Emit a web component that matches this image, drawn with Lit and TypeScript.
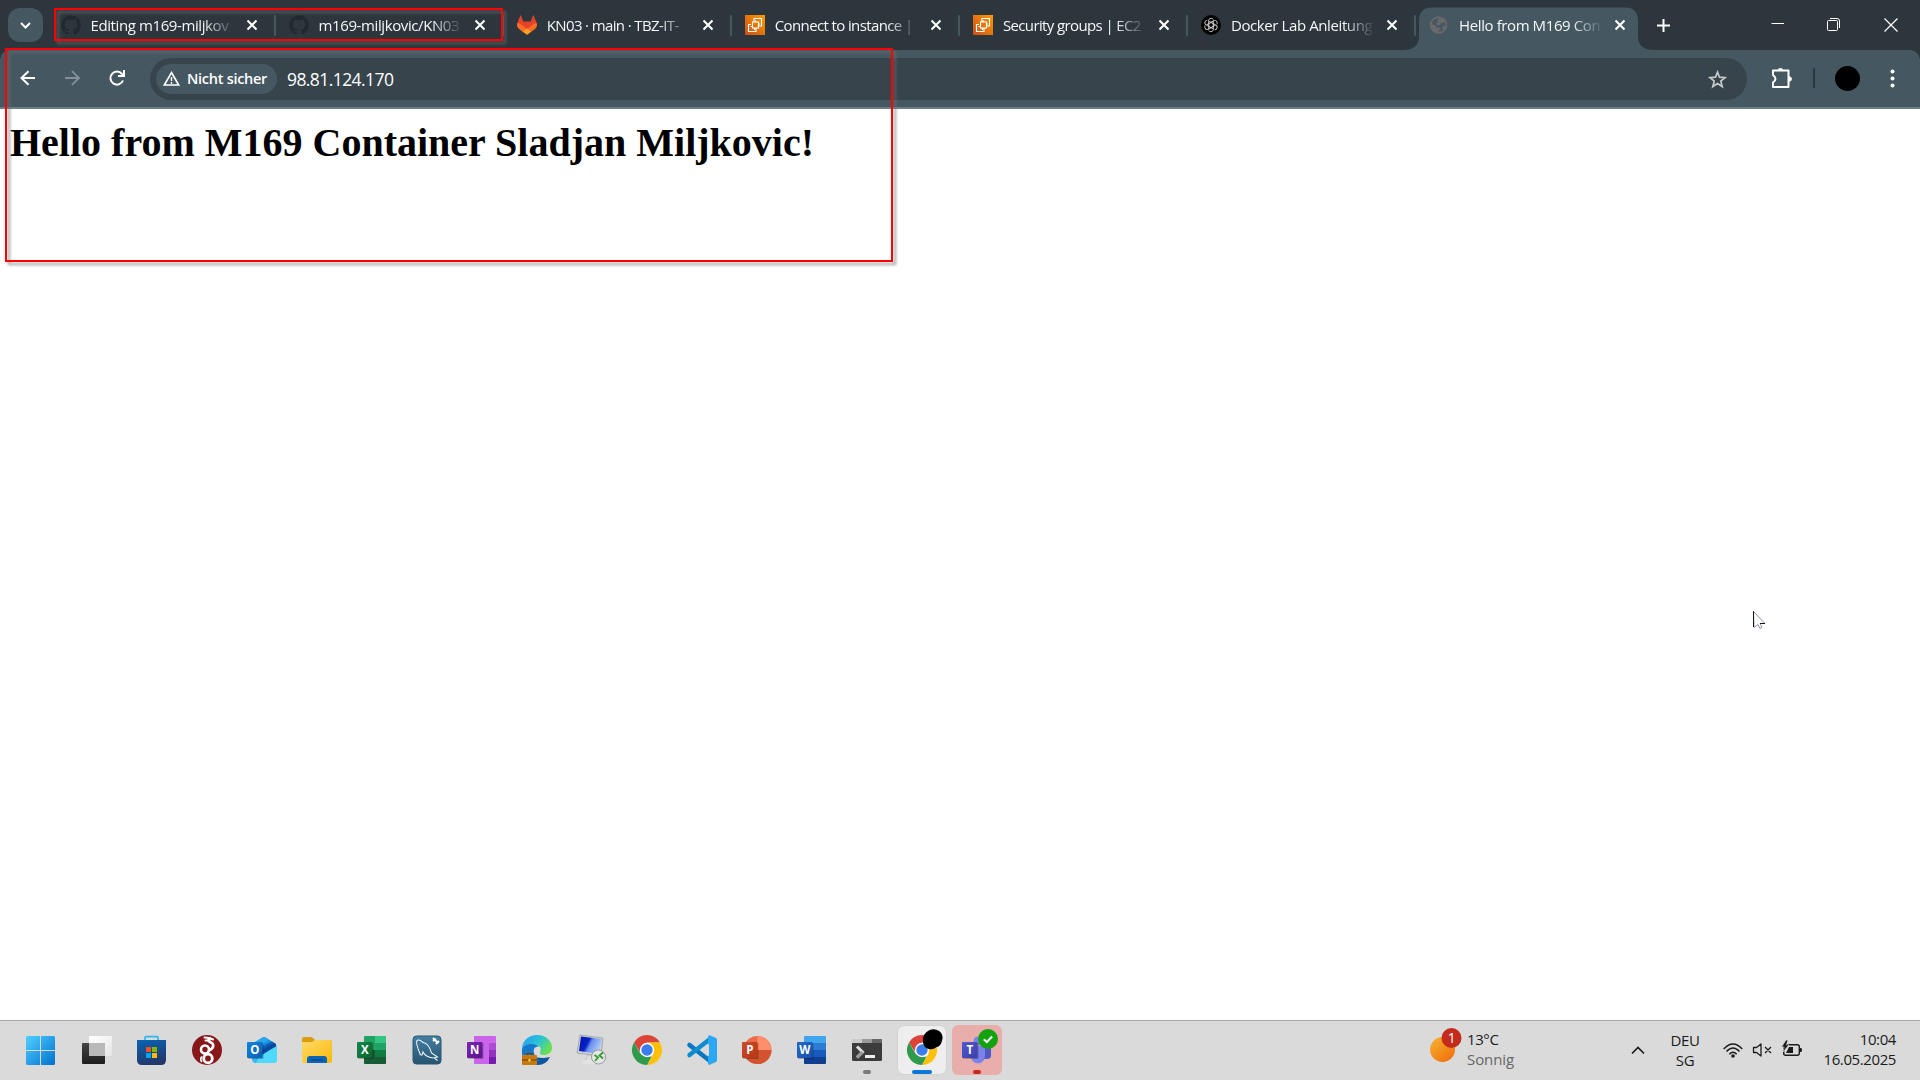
import { LitElement, html, css, svg, TemplateResult, SVGTemplateResult } from "lit";
import { customElement } from "lit/decorators.js";
import { classMap } from "lit/directives/class-map.js";

const github = svg`<path fill="#20292e" d="M10 .4a9.8 9.8 0 0 0-3.100 19.100c.5.1.7-.2.7-.5v-1.800c-2.700.6-3.300-1.200-3.300-1.200-.5-1.100-1.100-1.400-1.100-1.400-.9-.6.1-.6.1-.6 1 .1 1.500 1 1.500 1 .9 1.500 2.300 1.100 2.900.8.1-.6.3-1.100.6-1.300-2.200-.3-4.500-1.100-4.500-4.900 0-1.100.4-2 1-2.700-.1-.2-.4-1.200.1-2.600 0 0 .8-.3 2.700 1a9.300 9.300 0 0 1 4.900 0c1.900-1.300 2.700-1 2.700-1 .5 1.400.2 2.400.1 2.600.6.7 1 1.600 1 2.700 0 3.800-2.300 4.600-4.500 4.900.4.300.7.9.7 1.800V19c0 .3.2.6.7.5A9.800 9.800 0 0 0 10 .4z"/>`;
const gitlab = svg`<path fill="#e24329" d="M19.700 8 16.700.6q-.4-.7-.8.1L13.700 6.500H6.300L4.100.7q-.4-.8-.8-.1L.4 8q-1 3.600 1.800 6L10 19.600 17.800 14q2.900-2.300 1.900-6z"/><path fill="#fc6d26" d="M19.700 8q-2 .4-3.800 1.500L10 14l4.300 2.700 3.500-2.700q2.900-2.300 1.900-6zM.3 8q2 .4 3.800 1.500L10 14l-4.300 2.700L2.200 14Q-.7 11.700.3 8z"/><path fill="#fca326" d="m5.700 16.700 4.300-3.300 4.300 3.300-4.300 3z"/>`;
const aws = svg`<defs><linearGradient id="aw" x1="0" y1="1" x2="1" y2="0"><stop stop-color="#c8511b"/><stop offset="1" stop-color="#f90"/></linearGradient></defs><path fill="url(#aw)" d="M0 0h20v20H0z"/><g fill="none" stroke="#fff" stroke-width="1.100"><rect x="7.500" y="7" width="6" height="6"/><path d="M9 7V3.500h7.500V11h-3M6 9.500H3.500v7H11V13"/><path d="M10.500 5.500v1.500M13 9h2M5.500 11.500h2M9.500 13v2"/></g>`;
const openai = svg`<circle cx="10" cy="10" r="10" fill="#000"/><g fill="none" stroke="#c8c8c8" stroke-width=".9">${[0, 60, 120, 180, 240, 300].map(
  (a) => svg`<path transform="rotate(${a} 10 10)" d="M7.600 8.700V5.600q.2-2.300 2.500-2.300 1.500 0 2.300 1.200M7.600 5.900 12.300 8.700v3"/>`
)}</g>`;
const globe = svg`<circle cx="9.500" cy="10" r="7.900" fill="none" stroke="#69696b" stroke-width="1.700"/><path fill="#69696b" d="M10 2.500h2.500l3.500 3-1 2-3 .5-1 2H8L6.500 8.500 9 7.500 8.500 5zM2 9.500l4 .5 2 2.500h2.500l1 2-2 1.500V18l-4-1.500L2.500 13zM13.500 11.500l3.500-1-.5 3-2 2z"/>`;

interface Tab { title: string; icon: SVGTemplateResult; active?: boolean; tight?: boolean; }
const tabs: Tab[] = [
  { title: "Editing m169-miljkov", icon: github },
  { title: "m169-miljkovic/KN03", icon: github },
  { title: "KN03 · main · TBZ-IT-", icon: gitlab, tight: true },
  { title: "Connect to instance |", icon: aws, tight: true },
  { title: "Security groups | EC2", icon: aws, tight: true },
  { title: "Docker Lab Anleitung", icon: openai },
  { title: "Hello from M169 Con", icon: globe, active: true },
];

const tile = (letter: string, a: string, b: string, id: string) => svg`
  <defs><linearGradient id=${id} x1="0" y1="0" x2="1" y2="1"><stop stop-color=${a}/><stop offset="1" stop-color=${b}/></linearGradient></defs>
  <rect x="1" y="8" width="15.500" height="16" rx="1" fill="#000" opacity=".25"/>
  <rect x="0" y="7" width="15.500" height="16" rx="1" fill="url(#${id})"/>
  <text x="7.600" y="19" text-anchor="middle" font-family="Open Sans, sans-serif" font-weight="700" font-size="11.500" fill="#fff">${letter}</text>`;

const chrome = svg`<path fill="#db4437" d="M2 7.500A15 15 0 0 1 28 7.500H15L9 18.500z"/><path fill="#ffc107" d="M28 7.500A15 15 0 0 1 15 30L21.500 18.700 15 7.500z"/><path fill="#2f9a4c" d="M15 30A15 15 0 0 1 2 7.500l6.500 11.200L15 22l4.500-.5z"/><circle cx="15" cy="15" r="7.200" fill="#fff"/><circle cx="15" cy="15" r="5.700" fill="#3b7ded"/>`;

interface App { icon: SVGTemplateResult; state?: string; overlay?: TemplateResult; }
const apps: App[] = [
  { icon: svg`<defs><linearGradient id="wn" x2="1" y2="1"><stop stop-color="#4fd0ff"/><stop offset="1" stop-color="#0270cf"/></linearGradient></defs><path fill="url(#wn)" d="M-1 2.500Q-1 1 .5 1H13v14H-1zM14 1h12.500Q28 1 28 2.500V15H14zM-1 16h14v14H.5Q-1 30-1 28.500zM14 16h14v12.500q0 1.500-1.500 1.500H14z"/>` },
  { icon: svg`<defs><linearGradient id="tv" x2="0" y2="1"><stop stop-color="#444"/><stop offset="1" stop-color="#1d1d1d"/></linearGradient><linearGradient id="tv2" x2="1" y2="1"><stop stop-color="#fff"/><stop offset="1" stop-color="#e6e6e6"/></linearGradient></defs><rect y="8" width="23" height="21" rx="1" fill="url(#tv)"/><rect x="7" y="1" width="23" height="20" rx="1" fill="url(#tv2)"/><path fill="#b9b9b9" d="M7 8h16v13H8q-1 0-1-1z"/>` },
  { icon: svg`<defs><linearGradient id="st" x2=".3" y2="1"><stop stop-color="#0864b5"/><stop offset="1" stop-color="#21386b"/></linearGradient></defs><path d="M8 6V2.500Q8 1.700 9 1.700h11q1 0 1 .8V6" fill="none" stroke="#2fb8ef" stroke-width="1.700"/><path fill="url(#st)" d="M0 5h29v20q0 5-5 5H5q-5 0-5-5z"/><path fill="#f25022" d="M9 12h5v5H9z"/><path fill="#7fba00" d="M15 12h5v5h-5z"/><path fill="#00a4ef" d="M9 18h5v5H9z"/><path fill="#ffb900" d="M15 18h5v5h-5z"/>` },
  { icon: svg`<circle cx="15" cy="15" r="15" fill="#88171a"/><g fill="none" stroke="#fff" stroke-linecap="round"><circle cx="16" cy="23.500" r="4.300" stroke-width="2.800"/><circle cx="13" cy="14.500" r="4" stroke-width="2.600"/><path stroke-width="2.600" d="M17 15.500c6-3 5-7 1-8.500-2.500-1-1.500-3 0-3.500"/><path stroke-width="2" d="m12.500 2.500 5 .5 3.500 1.500M13.500 5.500h4"/><path stroke-width="1.600" d="M9.500 22q-1.500 2 0 4.500M14 19l5 .5"/></g>` },
  { icon: svg`<path fill="#1490df" d="M5 9 15.500 2.500Q17 1.700 18.500 2.500L29 9v8l-9 5L5 14z"/><path fill="#28a8ea" d="m5 9 10.500-6.500Q17 1.700 18.500 2.500L22 4.600 9 14H5z"/><path fill="#0f5db8" d="M10 14 25 6.500 29 9v6l-14 6z"/><path fill="#35b8f1" d="M5 14l15 7 10-7v10q0 4-4 4H9q-4 0-4-4z"/><path fill="#50d9ff" d="m13 20 17-9v13q0 4-4 4H9z"/><path fill="#0a489c" d="m12 17 15-9 2.500 2.500L15 20z"/>${tile("O", "#1384dc", "#0860b4", "ol")}` },
  { icon: svg`<defs><linearGradient id="fd" x2="1" y2="1"><stop stop-color="#ffdb6e"/><stop offset="1" stop-color="#fab804"/></linearGradient></defs><path fill="#dd9c0e" d="M0 4q0-2 2-2h7q1 0 2 1l2 2h15q2 0 2 2v3H0z"/><path fill="url(#fd)" d="M0 7h10l3-2h15q2 0 2 2v19q0 2-2 2H2q-2 0-2-2z"/><path fill="#0d65b5" d="M5 28v-4q0-3 3-3h14q3 0 3 3v4z"/><path stroke="#08457f" stroke-width="1.300" d="M9 25h12"/>` },
  { icon: svg`<path fill="#21a366" d="M8 1h20q1 0 1 1v26q0 1-1 1H8q-1 0-1-1V2q0-1 1-1z"/><path fill="#33c481" d="M18 1h10q1 0 1 1v6H18z"/><path fill="#107c41" d="M7 15h22v7H7z"/><path fill="#185c37" d="M7 15h11v7h11v6q0 1-1 1H8q-1 0-1-1z"/>${tile("X", "#15864a", "#0b6331", "xl")}` },
  { icon: svg`<defs><linearGradient id="my" x2="0" y2="1"><stop stop-color="#457fa5"/><stop offset="1" stop-color="#26546f"/></linearGradient></defs><rect x="1" y="1" width="28" height="28" rx="3.500" fill="url(#my)" stroke="#285873"/><path fill="none" stroke="#edf5f8" stroke-width="1.100" d="M8.500 20C6 14 3.500 7 5 5.500c1-1.200 4 0 6 2 4 .5 7 5 8.500 10.500l6 4-3.500.8 3.500 2.700M8.500 20l1.500 0 1-3c2 4 6 5.500 10 6"/><path fill="none" stroke="#fff" stroke-width="2" d="m21 3 5 5m-5-2 3-2m0 5 3-3"/>` },
  { icon: svg`<path fill="#ca64ea" d="M8 1h20q1 0 1 1v26q0 1-1 1H8q-1 0-1-1V2q0-1 1-1z"/><path fill="#ae4bd5" d="M22 8h7v7h-7z"/><path fill="#9332bf" d="M22 15h7v7h-7z"/><path fill="#7719aa" d="M22 22h7v6q0 1-1 1h-6z"/>${tile("N", "#7c25b5", "#58168d", "on")}` },
  { icon: svg`<defs><linearGradient id="ed" x2="1" y2=".5"><stop offset=".3" stop-color="#27aee9"/><stop offset=".6" stop-color="#2cc5cf"/><stop offset="1" stop-color="#68e052"/></linearGradient></defs><path fill="#0c559f" d="M9 15q1 8 11 8 4 0 8-1-4 8-12 8Q0 30 0 15z"/><path fill="url(#ed)" d="M0 13C1 4 8 0 15 0c9 0 15 6 15 12.500C30 18 26 20 22 20c-4 0-5-2-3.500-4C20 11 15 9 10 10 4 11 1 13 0 17z"/><path fill="#1478cc" d="M0 15c1-7 14-8 17-3-4-1-6 2-5 6 1 3 3 6 6 8L7 27Q0 24 0 15z"/><rect y="20" width="15" height="10" rx="1" fill="#c77909"/><path stroke="#6d3b02" d="M0 25h15M5 20v-1.500h5V20" fill="none"/><path fill="#ffe067" d="M6.500 24h2v2.500h-2z"/>` },
  { icon: svg`<defs><linearGradient id="rd" x2="1" y2=".4"><stop stop-color="#0015a5"/><stop offset=".45" stop-color="#0821c8"/><stop offset=".6" stop-color="#6a91ef"/><stop offset="1" stop-color="#b0c6f4"/></linearGradient></defs><path fill="#dfdfdf" stroke="#aaa" stroke-width=".5" d="M11 20h8l1 6H8z"/><ellipse cx="13" cy="27" rx="8" ry="2.500" fill="#e2e2e2"/><path fill="#cfd2d7" stroke="#848b93" stroke-width=".6" d="m3 0 23 3-2 18L0 18z"/><path fill="url(#rd)" d="M4 1.500 24.500 4l-2 15L2 16z"/><circle cx="21.500" cy="22" r="7" fill="#e6e6e6" stroke="#999"/><path fill="none" stroke="#399d34" stroke-width="1.900" d="m17.500 20 3.500 2.500-3 3.500m8-8.500-3.500 3 3.500 3"/>` },
  { icon: chrome },
  { icon: svg`<path fill="none" stroke="#0b76bd" stroke-width="4.500" stroke-linecap="round" d="M2.500 10 23 26"/><path fill="none" stroke="#118bd0" stroke-width="4.500" stroke-linecap="round" d="M2.500 20 23 4"/><path fill="#2aa8f5" d="m22 0 7 3q1 .5 1 2v20q0 1.500-1 2l-7 3q-1-1-1-2V2q0-1 1-2z"/><path fill="#dadada" d="M22 9v12l-8-6z"/>` },
  { icon: svg`<circle cx="15.500" cy="15" r="14" fill="#ed6c47"/><path fill="#ff8f6b" d="M15.500 1a14 14 0 0 1 14 14h-14z"/><path fill="#d35230" d="M1.500 15h28a14 14 0 0 1-28 0z"/>${tile("P", "#ca4c28", "#b63616", "pp")}` },
  { icon: svg`<path fill="#41a5ee" d="M8 1h20q1 0 1 1v6H7V2q0-1 1-1z"/><path fill="#2b7cd3" d="M7 8h22v7H7z"/><path fill="#185abd" d="M7 15h22v7H7z"/><path fill="#103f91" d="M7 22h22v6q0 1-1 1H8q-1 0-1-1z"/>${tile("W", "#2467c3", "#1851ae", "wd")}` },
  { icon: svg`<rect y="4" width="30" height="22" rx="1.500" fill="#3c3c3c"/><path fill="#ccc" d="M0 8V5q0-1 1-1h9v4z"/><path fill="#999" d="M10 4h10v4H10z"/><path fill="#666" d="M20 4h9q1 0 1 1v3H20z"/><path fill="none" stroke="#dedede" stroke-width="3" d="m5 11.500 5.500 5.500L5 22.500"/><path fill="none" stroke="#999" stroke-width="3" d="m10.500 17-5.500 5.500"/><path fill="#eee" d="M13 20h10v3H13z"/>`, state: "running" },
  { icon: chrome, state: "focused", overlay: html`<svg class="cover" viewBox="0 0 22 22"><path d="M8 1Q13-1 18 2q5 4 3 10-1 6-6 7-3 3-8 2-6-2-6-8Q0 5 8 1z"/></svg>` },
  { icon: svg`<circle cx="25" cy="9" r="3.500" fill="#5059c9"/><path fill="#5059c9" d="M20 13h9v8q0 3-4.500 3H20z"/><circle cx="16" cy="6" r="4.500" fill="#7b83eb"/><path fill="#7b83eb" d="M9 11h14v9q0 8-7 8.500-7-.5-7-8.500z"/>${tile("T", "#5059c9", "#3b40ae", "tm")}`, state: "alert", overlay: html`<svg class="check" viewBox="0 0 20 20"><circle cx="10" cy="10" r="10" fill="#13a10e"/><path fill="none" stroke="#fff" stroke-width="2" d="m5.800 10.200 3 2.800 5.400-5.500"/></svg>` },
];

@customElement("app-root")
export class AppRoot extends LitElement {
  static styles = css`
    :host { display: block; width: 1920px; height: 1080px; position: relative; overflow: hidden; background: #fff; font-family: "Open Sans", "Noto Sans", sans-serif; }
    * { box-sizing: border-box; }
    svg { display: block; flex: none; overflow: visible; }
    .screen { height: 1080px; display: flex; flex-direction: column; }
    .strip { height: 50px; background: #2c363c; display: flex; align-items: flex-start; flex: none; }
    .search { width: 35px; height: 34px; margin: 8px 5.500px 0 8px; border-radius: 12px; background: #455861; display: flex; align-items: center; justify-content: center; flex: none; }
    .tab { width: 228.100px; height: 50px; padding: 0 0 0 12px; display: flex; align-items: center; position: relative; flex: none; color: #f4f6f7; }
    .tab svg, .label, .divider { position: relative; }
    .label { width: 142px; margin-left: 10px; font-size: 15px; letter-spacing: -.4px; line-height: 22px; overflow: hidden; white-space: nowrap; -webkit-mask-image: linear-gradient(90deg, #000 112px, transparent 144px); }
    .tight { letter-spacing: -.62px; }
    .shut { margin-left: 14px; }
    .divider { width: 2px; height: 21px; border-radius: 1px; background: #455861; margin-left: 16.500px; }
    .active .divider { visibility: hidden; }
    .shape { position: absolute !important; left: -14px; top: 7px; }
    .plus { margin: 19px 0 0 12px; }
    .window { margin-left: auto; display: flex; gap: 43px; padding: 18px 22px 0 0; }
    .bar { height: 59px; background: #455861; border-bottom: 2px solid #6b7e88; display: flex; align-items: center; padding: 0 22px 0 20px; flex: none; position: relative; }
    .corner { position: absolute; top: 0; width: 10px; height: 10px; background: radial-gradient(circle at 100% 100%, #455861 9.500px, #2c363c 10px); }
    .left { left: 0; }
    .right { right: 0; background: radial-gradient(circle at 0 100%, #455861 9.500px, #2c363c 10px); }
    .nav { display: flex; gap: 29px; width: 130px; align-items: center; }
    .nav svg { margin: 0 0 1px -.2px; }
    .omni { width: 1597px; height: 42px; border-radius: 21px; background: #38444b; display: flex; align-items: center; padding: 0 20px 0 6px; color: #fff; }
    .chip { height: 30px; width: 121px; border-radius: 15px; background: #455861; display: flex; align-items: center; gap: 7px; padding-left: 7px; font-size: 14.500px; font-weight: 600; letter-spacing: -.28px; white-space: nowrap; }
    .url { margin-left: 10px; font-size: 17.500px; letter-spacing: -.58px; flex: 1; padding-top: 1px; }
    .tools { display: flex; align-items: center; margin-left: 24px; flex: 1; padding-bottom: 1px; }
    .rule { width: 2px; height: 20px; background: #2c373d; margin-left: 21px; border-radius: 1px; }
    .avatar { width: 25px; height: 25px; border-radius: 50%; background: #000; margin-left: 20px; }
    .dots { margin-left: 30px; }
    .page { flex: 1; padding: 11px 10px; }
    h1 { margin: 0; font: 700 40px/46px "Liberation Serif", "Times New Roman", serif; color: #000; }
    .task { height: 60px; background: #dadada; border-top: 1px solid #a8a8a8; display: flex; align-items: center; padding: 0 24px 1px 27px; flex: none; color: #1c1c1c; font-size: 15px; line-height: 20px; letter-spacing: -.4px; }
    .apps { display: flex; gap: 5px; margin-left: -10px; }
    .app { width: 50px; height: 50px; border-radius: 6px; display: flex; align-items: center; justify-content: center; position: relative; }
    .app::after { content: ""; position: absolute; left: 21px; top: 45px; width: 8px; height: 4px; border-radius: 2px; }
    .running::after { background: #7b7b7b; }
    .focused::before { content: ""; position: absolute; inset: 1px; background: #eee; border-radius: 6px; box-shadow: 0 0 0 .5px #ccc; }
    .focused svg { position: relative; }
    .focused::after { background: #0a78d4; left: 15px; width: 20px; }
    .alert { background: #e9aeab; }
    .alert::after { background: #c42b1c; }
    .app .cover { position: absolute; left: 25px; top: 4px; }
    .cover { width: 21px; height: 21px; }
    .check { position: absolute; width: 20px; height: 20px; left: 26px; top: 4px; }
    .weather { display: flex; align-items: center; gap: 6px; margin-left: 428px; width: 201px; white-space: nowrap; padding-bottom: 3px; }
    .muted { color: #676767; letter-spacing: -.1px; }
    .lang { text-align: center; width: 40px; margin-left: 20px; padding-bottom: 1px; }
    .status { display: flex; gap: 9px; margin-left: 18px; align-items: center; }
    .clock { margin-left: auto; text-align: right; white-space: nowrap; padding-bottom: 3px; }
    .mark { position: absolute; border: 2px solid #f00; filter: drop-shadow(3px 3px 1.500px rgba(110, 110, 110, .7)); }
    .mark-tabs { left: 54px; top: 8px; width: 449px; height: 33px; }
    .mark-page { left: 5px; top: 48px; width: 888px; height: 214px; }
    .pointer { position: absolute; left: 1753px; top: 611px; }
  `;

  private renderTab(t: Tab) {
    return html`<div class=${classMap({ tab: true, active: !!t.active })}>
      ${t.active ? html`<svg class="shape" width="248" height="43"><path fill="#455861" d="M0 43Q16 43 16 29V14Q16 .5 29 .5H222Q235 .5 235 14V29Q235 43 251 43z"/></svg>` : ""}
      <svg width="20" height="20" viewBox="0 0 20 20">${t.icon}</svg>
      <span class=${classMap({ label: true, tight: !!t.tight })}>${t.title}</span>
      <svg class="shut" width="11" height="11"><path stroke="#fff" stroke-width="2" d="m.5.500 9 9M9.500.5l-9 9"/></svg>
      <span class="divider"></span>
    </div>`;
  }

  private renderApp(a: App) {
    return html`<div class="app ${a.state ?? ""}"><svg width="30" height="30" viewBox="0 0 30 30">${a.icon}</svg>${a.overlay ?? ""}</div>`;
  }

  render() {
    return html`
      <div class="screen">
        <div class="strip">
          <div class="search"><svg width="11" height="7"><path fill="none" stroke="#fff" stroke-width="2" d="m1 1 4.500 4.500L10 1"/></svg></div>
          ${tabs.map((t) => this.renderTab(t))}
          <svg class="plus" width="13" height="13"><path stroke="#fff" stroke-width="2" d="M6.500 0v13M0 6.500h13"/></svg>
          <div class="window">
            <svg width="13" height="13"><path stroke="#fff" d="M-.5 5.500h12.500"/></svg>
            <svg width="13" height="13"><rect x="-.5" y="2.500" width="10" height="10" rx="1" fill="none" stroke="#fff"/><path fill="none" stroke="#fff" d="M2 .5h7q2.500 0 2.500 2.500v7"/></svg>
            <svg width="14" height="14"><path stroke="#fff" stroke-width="1.200" d="m.5.5 13 13m0-13-13 13"/></svg>
          </div>
        </div>
        <div class="bar">
          <span class="corner left"></span><span class="corner right"></span>
          <div class="nav">
            <svg width="16" height="16"><path fill="none" stroke="#fff" stroke-width="2" d="M15 8H1.500m7-6.800L1.500 8l7 6.800"/></svg>
            <svg width="16" height="16"><path fill="none" stroke="#839098" stroke-width="1.800" d="M0 8h14M7 1.200 14 8l-7 6.800"/></svg>
            <svg width="16" height="16"><path fill="none" stroke="#fff" stroke-width="2" d="M14 10.500A6.500 6.500 0 1 1 13 4l1 1.500"/><path fill="none" stroke="#fff" stroke-width="2" d="M15 0v6H9"/></svg>
          </div>
          <div class="omni">
            <div class="chip"><svg width="17" height="15"><path fill="none" stroke="#fff" stroke-width="1.600" d="M8.500 1.500 15.700 14H1.300z"/><path stroke="#fff" stroke-width="1.500" d="M8.500 6v4M8.500 11v1.700"/></svg>Nicht sicher</div>
            <span class="url">98.81.124.170</span>
            <svg width="19" height="18"><path fill="none" stroke="#c5c9cc" stroke-width="1.700" d="m9.500 2 2 5.200 5.500.4-4.200 3.500 1.400 5.400-4.700-3-4.700 3 1.400-5.400L2 7.600l5.500-.4z"/></svg>
          </div>
          <div class="tools">
            <svg width="21" height="20"><path fill="none" stroke="#fff" stroke-width="2" stroke-linejoin="round" d="M2 2.500h15.500V19H2v-4.500q5-4 0-7.500z"/><path fill="#fff" d="M7 2q0-2 2.500-2T12 2zM18 8q3 1 3 3t-3 3z"/></svg>
            <span class="rule"></span><span class="avatar"></span>
            <svg class="dots" width="5" height="19"><g fill="#fff"><circle cx="2.500" cy="2.500" r="2"/><circle cx="2.500" cy="9.500" r="2"/><circle cx="2.500" cy="16.500" r="2"/></g></svg>
          </div>
        </div>
        <main class="page"><h1>Hello from M169 Container Sladjan Miljkovic!</h1></main>
        <div class="task">
          <div class="apps">${apps.map((a) => this.renderApp(a))}</div>
          <div class="weather">
            <svg width="31" height="36"><defs><linearGradient id="sun" x2=".8" y2="1"><stop stop-color="#f2b632"/><stop offset="1" stop-color="#f36f0c"/></linearGradient></defs><circle cx="12.500" cy="18.500" r="12.500" fill="url(#sun)"/><circle cx="21.500" cy="7" r="10" fill="#c42b1c"/><text x="21.500" y="12" text-anchor="middle" font-size="14" fill="#fff">1</text></svg>
            <div>13°C<br /><span class="muted">Sonnig</span></div>
          </div>
          <svg width="14" height="8"><path fill="none" stroke="#1c1c1c" stroke-width="1.700" d="m1 7.500 6-6 6 6"/></svg>
          <div class="lang">DEU<br />SG</div>
          <div class="status">
            <svg width="20" height="15"><g fill="none" stroke="#1c1c1c" stroke-width="1.400"><path d="M.7 6q9.300-10 18.600 0M3.500 8.500q6.500-7 13 0M6.300 11.200q3.700-4 7.400 0"/></g><circle cx="10" cy="13" r="1.800" fill="#1c1c1c"/></svg>
            <svg width="20" height="14"><path fill="none" stroke="#1c1c1c" stroke-width="1.300" stroke-linejoin="round" d="M1.500 4.500h3L9 1v12L4.500 9.500h-3zM13 4l6 6m0-6-6 6"/></svg>
            <svg width="21" height="16"><rect x="2.700" y="2.700" width="15.600" height="10.600" rx="2" fill="none" stroke="#1c1c1c" stroke-width="1.400"/><path fill="#1c1c1c" d="M19 6h1q1 0 1 2t-1 2h-1zM5 11l3-6h4v6z"/><path fill="#1c1c1c" stroke="#dadada" stroke-width=".7" d="M5-2 .5 5H3l-1 5 6-7H5.500L7-2z"/></svg>
          </div>
          <div class="clock">10:04<br />16.05.2025</div>
        </div>
      </div>
      <div class="mark mark-tabs"></div>
      <div class="mark mark-page"></div>
      <svg class="pointer" width="14" height="20"><path fill="#fff" stroke="#8a8a90" stroke-width=".9" d="M.5.5 12 12.500H7l2 4-2 1-2-4-4 3z"/><path stroke="#111827" d="M.5 0v16M7 12.500h5"/></svg>`;
  }
}
